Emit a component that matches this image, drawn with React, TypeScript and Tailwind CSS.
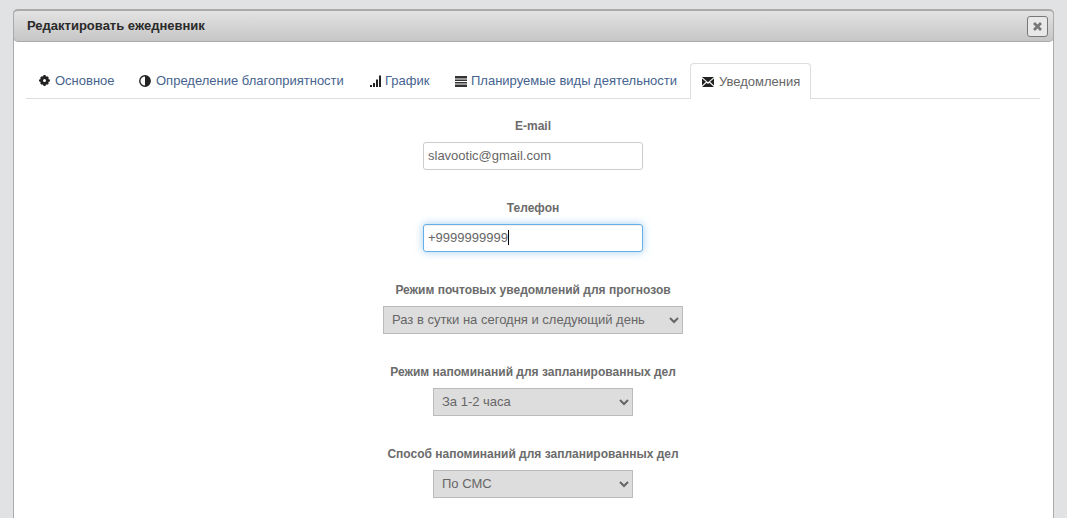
const LABEL = 'block text-center text-[12px] leading-[17px] font-bold text-[#6b6b6b] mb-[7px]';

function GearIcon() {
  return (
    <svg width="11" height="11" viewBox="0 0 11 11" className="shrink-0">
      <circle cx="5.5" cy="5.5" r="3" fill="none" stroke="#222" strokeWidth="3" />
      <path d="M4.400 0h2.200v2H4.400zM4.400 9h2.200v2H4.400zM0 4.400h2v2.200H0zM9 4.400h2v2.200H9z" fill="#222" />
      <path d="M1.200 2.600l1.400-1.400 1.200 1.200-1.400 1.400zM7.200 8.600l1.400-1.400 1.200 1.200-1.400 1.400zM8.400 1.200l1.400 1.400-1.200 1.200-1.400-1.400zM2.400 7.200l1.400 1.400-1.200 1.200-1.400-1.400z" fill="#222" />
    </svg>
  );
}

function ContrastIcon() {
  return (
    <svg width="12" height="12" viewBox="0 0 12 12" className="shrink-0">
      <circle cx="6" cy="6" r="5.200" fill="#fff" stroke="#222" strokeWidth="1.400" />
      <path d="M6 0.800a5.200 5.200 0 0 1 0 10.400z" fill="#222" />
    </svg>
  );
}

function SignalIcon() {
  return (
    <svg width="12" height="12" viewBox="0 0 12 12" className="shrink-0">
      <path d="M0 10h2v2H0zM3 8h2v4H3zM6 4.500h2V12H6zM9 0.500h2V12H9z" fill="#222" />
    </svg>
  );
}

function ListIcon() {
  return (
    <svg width="12" height="12" viewBox="0 0 12 12" className="shrink-0">
      <path d="M0 1h12v2.500H0zM0 4.500h12v1.500H0zM0 7h12v1.500H0zM0 9.500h12v2.500H0z" fill="#333" />
    </svg>
  );
}

function MailIcon() {
  return (
    <svg width="12" height="10" viewBox="0 0 12 10" className="shrink-0">
      <path d="M0 0h12L6 5.200zM0 1.400v7.200l4-3.800zM12 1.400v7.200L8 4.800zM0 10l4.700-4.300L6 6.900l1.300-1.200L12 10z" fill="#222" />
    </svg>
  );
}

const tabs = [
  { label: 'Основное', icon: <GearIcon />, cls: 'w-[98px] pl-[13px]', gap: 'gap-[5px]' },
  { label: 'Определение благоприятности', icon: <ContrastIcon />, cls: 'w-[229px] pl-[13px]', gap: 'gap-[5px]' },
  { label: 'График', icon: <SignalIcon />, cls: 'w-[83px] pl-[13px]', gap: 'gap-[3px]' },
  { label: 'Планируемые виды деятельности', icon: <ListIcon />, cls: 'w-[246px] pl-[13px]', gap: 'gap-[4px]' },
];

function Tabs() {
  return (
    <div className="flex h-[36px] border-b border-[#ddd] text-[13px] leading-[18px]">
      {tabs.map((t, i) => (
        <a key={i} className={`flex items-center h-[35px] mr-[2px] text-[#46638f] ${t.cls} ${t.gap}`}>
          {t.icon}
          <span>{t.label}</span>
        </a>
      ))}
      <a className="flex items-center gap-[5px] h-[36px] w-[121px] pl-[11px] bg-white border border-b-0 border-[#ddd] rounded-t-[4px] text-[#666] relative">
        <MailIcon />
        <span>Уведомления</span>
      </a>
    </div>
  );
}

function Field({ label, children }: { label: string; children: React.ReactNode }) {
  return (
    <div className="h-[82px] flex flex-col items-center">
      <label className={LABEL}>{label}</label>
      {children}
    </div>
  );
}

const SELECT = 'h-[28px] bg-[#ddd] border border-[#bbb] text-[13px] text-[#666] pl-[4px] pb-[2px] outline-none';

export default function App() {
  return (
    <div className="h-[518px] overflow-hidden bg-[#e1e2e4] pt-[9px] px-[13px]" style={{ fontFamily: '"Liberation Sans", Arial, sans-serif' }}>
      <div className="h-[600px] bg-white border-x border-[#aaa] rounded-t-[5px]">
        <div className="-mx-px h-[33px] flex items-center justify-between pl-[13px] pr-[5px] rounded-[5px] border border-[#aaa] border-t-2 bg-linear-to-b from-[#e3e3e3] to-[#c6c6c6]">
          <span className="text-[13px] font-bold text-[#2a2a2a]">Редактировать ежедневник</span>
          <button className="w-[21px] h-[21px] flex items-center justify-center rounded-[3px] border border-[#777] bg-[#e8e8e8]">
            <svg width="11" height="11" viewBox="0 0 11 11">
              <path d="M2 2l7 7M9 2l-7 7" stroke="#777" strokeWidth="2.800" />
            </svg>
          </button>
        </div>
        <div className="pt-[21px] pl-[12px] pr-[13px]">
          <Tabs />
          <div className="pt-[19px]">
            <Field label="E-mail">
              <input
                readOnly
                value="slavootic@gmail.com"
                className="w-[220px] h-[28px] pl-[4px] pr-[4px] pb-[2px] bg-white border border-[#ccc] rounded-[3px] text-[13px] text-[#666] outline-none"
              />
            </Field>
            <Field label="Телефон">
              <div className="relative">
                <input
                  readOnly
                  value="+9999999999"
                  className="w-[220px] h-[28px] pl-[4px] pr-[4px] pb-[2px] bg-white border border-[#66afe9] rounded-[3px] text-[13px] text-[#666] outline-none shadow-[inset_0_1px_1px_rgba(0,0,0,0.075),0_0_8px_rgba(102,175,233,0.6)]"
                />
                <span className="absolute left-[85px] top-[6px] w-px h-[15px] bg-black" />
              </div>
            </Field>
            <Field label="Режим почтовых уведомлений для прогнозов">
              <select className={`${SELECT} w-[300px]`} defaultValue="a">
                <option value="a">Раз в сутки на сегодня и следующий день</option>
              </select>
            </Field>
            <Field label="Режим напоминаний для запланированных дел">
              <select className={`${SELECT} w-[200px]`} defaultValue="a">
                <option value="a">За 1-2 часа</option>
              </select>
            </Field>
            <Field label="Способ напоминаний для запланированных дел">
              <select className={`${SELECT} w-[200px]`} defaultValue="a">
                <option value="a">По СМС</option>
              </select>
            </Field>
          </div>
        </div>
      </div>
    </div>
  );
}
